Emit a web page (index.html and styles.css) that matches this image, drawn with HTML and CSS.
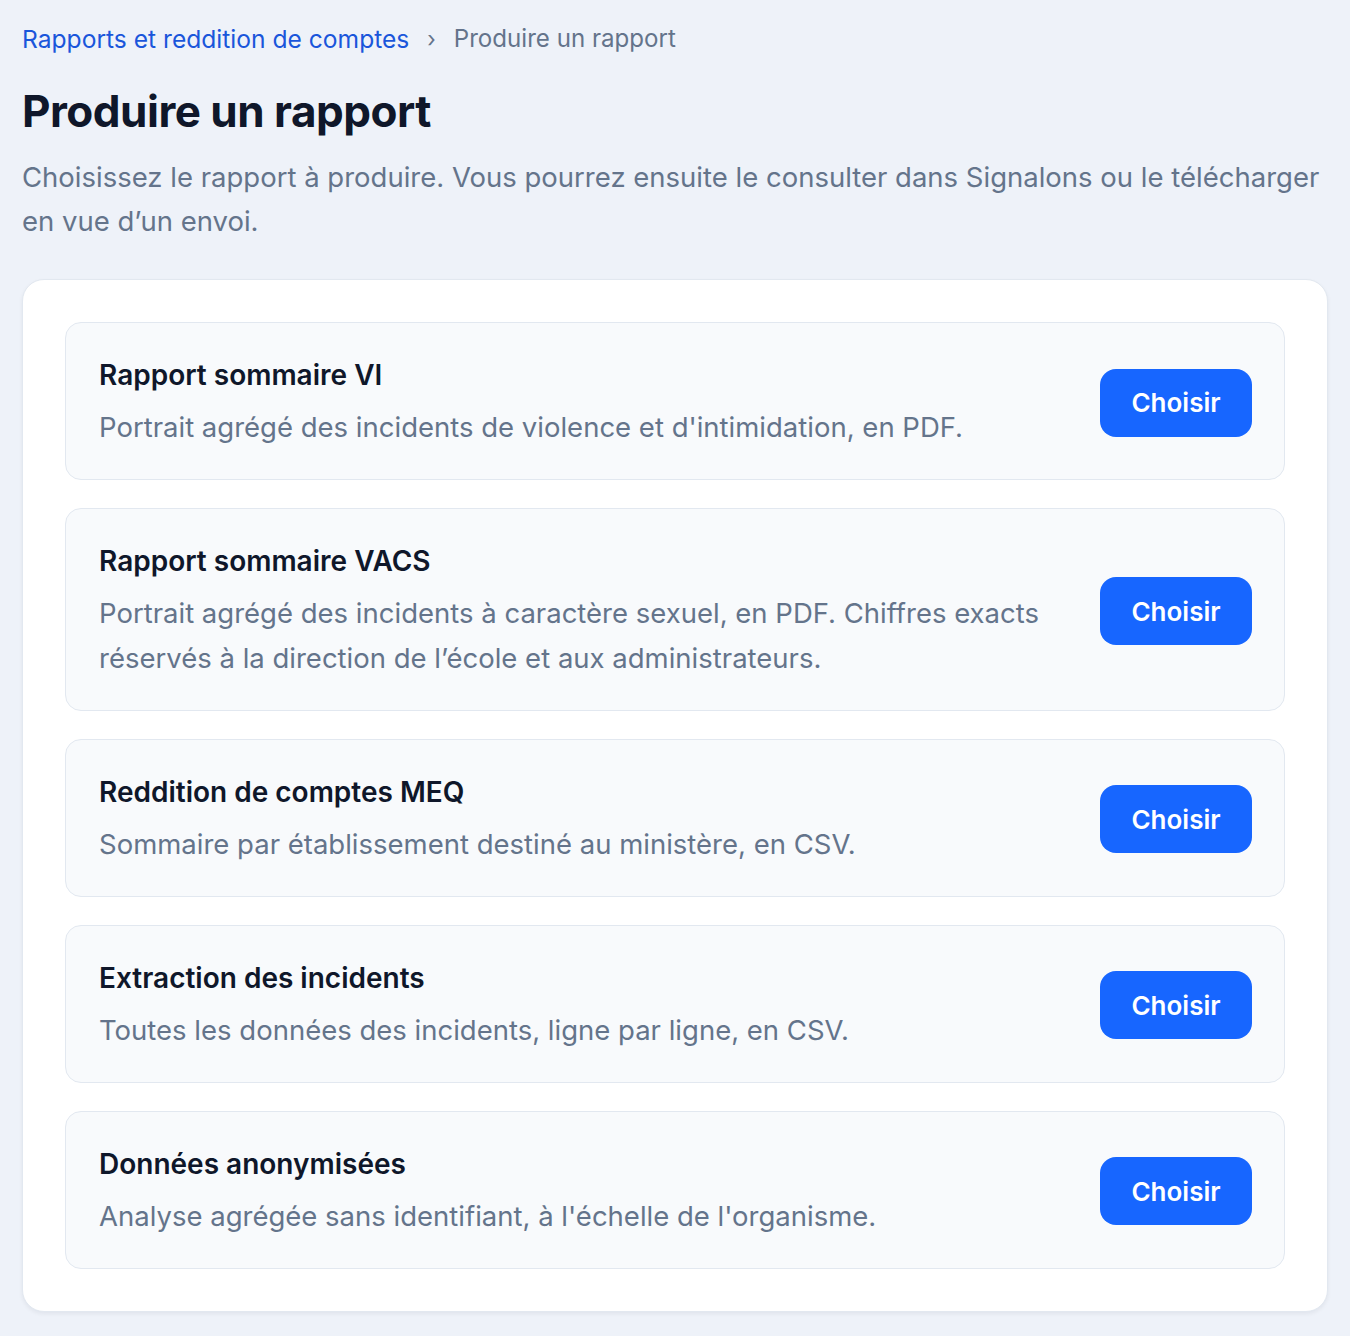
FILE: index.html
```html
<!DOCTYPE html>
<html lang="fr">
<head>
<meta charset="utf-8">
<title>Produire un rapport</title>
<link rel="stylesheet" href="styles.css">
</head>
<body>
<main class="page">
  <nav class="crumbs">
    <a class="crumb-link" href="#">Rapports et reddition de comptes</a>
    <span class="crumb-sep">›</span>
    <span class="crumb-current">Produire un rapport</span>
  </nav>
  <h1 class="title">Produire un rapport</h1>
  <p class="lead">Choisissez le rapport à produire. Vous pourrez ensuite le consulter dans Signalons ou le télécharger en vue d’un envoi.</p>
  <section class="card">
    <div class="item">
      <div class="item-text">
        <h2 class="item-title">Rapport sommaire VI</h2>
        <p class="item-desc">Portrait agrégé des incidents de violence et d'intimidation, en PDF.</p>
      </div>
      <button class="btn">Choisir</button>
    </div>
    <div class="item">
      <div class="item-text">
        <h2 class="item-title">Rapport sommaire VACS</h2>
        <p class="item-desc">Portrait agrégé des incidents à caractère sexuel, en PDF. Chiffres exacts réservés à la direction de l’école et aux administrateurs.</p>
      </div>
      <button class="btn">Choisir</button>
    </div>
    <div class="item">
      <div class="item-text">
        <h2 class="item-title">Reddition de comptes MEQ</h2>
        <p class="item-desc">Sommaire par établissement destiné au ministère, en CSV.</p>
      </div>
      <button class="btn">Choisir</button>
    </div>
    <div class="item">
      <div class="item-text">
        <h2 class="item-title">Extraction des incidents</h2>
        <p class="item-desc">Toutes les données des incidents, ligne par ligne, en CSV.</p>
      </div>
      <button class="btn">Choisir</button>
    </div>
    <div class="item">
      <div class="item-text">
        <h2 class="item-title">Données anonymisées</h2>
        <p class="item-desc">Analyse agrégée sans identifiant, à l'échelle de l'organisme.</p>
      </div>
      <button class="btn">Choisir</button>
    </div>
  </section>
</main>
</body>
</html>
```

FILE: styles.css
```css
* { box-sizing: border-box; }
html, body { margin: 0; }
body {
  background: #eef2f9;
  font-family: Inter, "Noto Sans", sans-serif;
  color: #0f172a;
}
.page {
  padding: 21px 22px 24px;
}
.crumbs {
  display: flex;
  align-items: center;
  gap: 16px;
  font-size: 24.6px;
  line-height: 36px;
}
.crumb-link { color: #1a56db; text-decoration: none; }
.crumb-sep { color: #64748b; font-size: 22px; padding: 0 2px; }
.crumb-current { color: #64748b; font-size: 24.1px; }
.title {
  margin: 22px 0 0;
  font-size: 44px;
  line-height: 64px;
  font-weight: 700;
  letter-spacing: -0.5px;
  color: #0f172a;
}
.lead {
  margin: 12px 0 0;
  font-size: 27.5px;
  line-height: 44px;
  color: #64748b;
}
.card {
  margin-top: 36px;
  background: #fff;
  border: 1px solid #e2e8f0;
  border-radius: 22px;
  box-shadow: 0 2px 4px rgba(15, 23, 42, 0.06);
  padding: 42px 42px;
  display: flex;
  flex-direction: column;
  gap: 28px;
}
.item {
  display: flex;
  align-items: center;
  justify-content: space-between;
  gap: 40px;
  background: #f8fafc;
  border: 1px solid #e2e8f0;
  border-radius: 16px;
  padding: 33px 32px 29.5px 33px;
}
.item-title {
  margin: 0;
  font-size: 28px;
  line-height: 38px;
  font-weight: 600;
  color: #0f172a;
}
.item-desc {
  margin: 11px 0 0;
  font-size: 27.5px;
  line-height: 44.5px;
  color: #64748b;
}
.btn {
  flex: none;
  width: 152px;
  height: 68px;
  border: none;
  border-radius: 16px;
  background: #1766ff;
  color: #fff;
  font-family: inherit;
  font-size: 26px;
  font-weight: 600;
}
```
